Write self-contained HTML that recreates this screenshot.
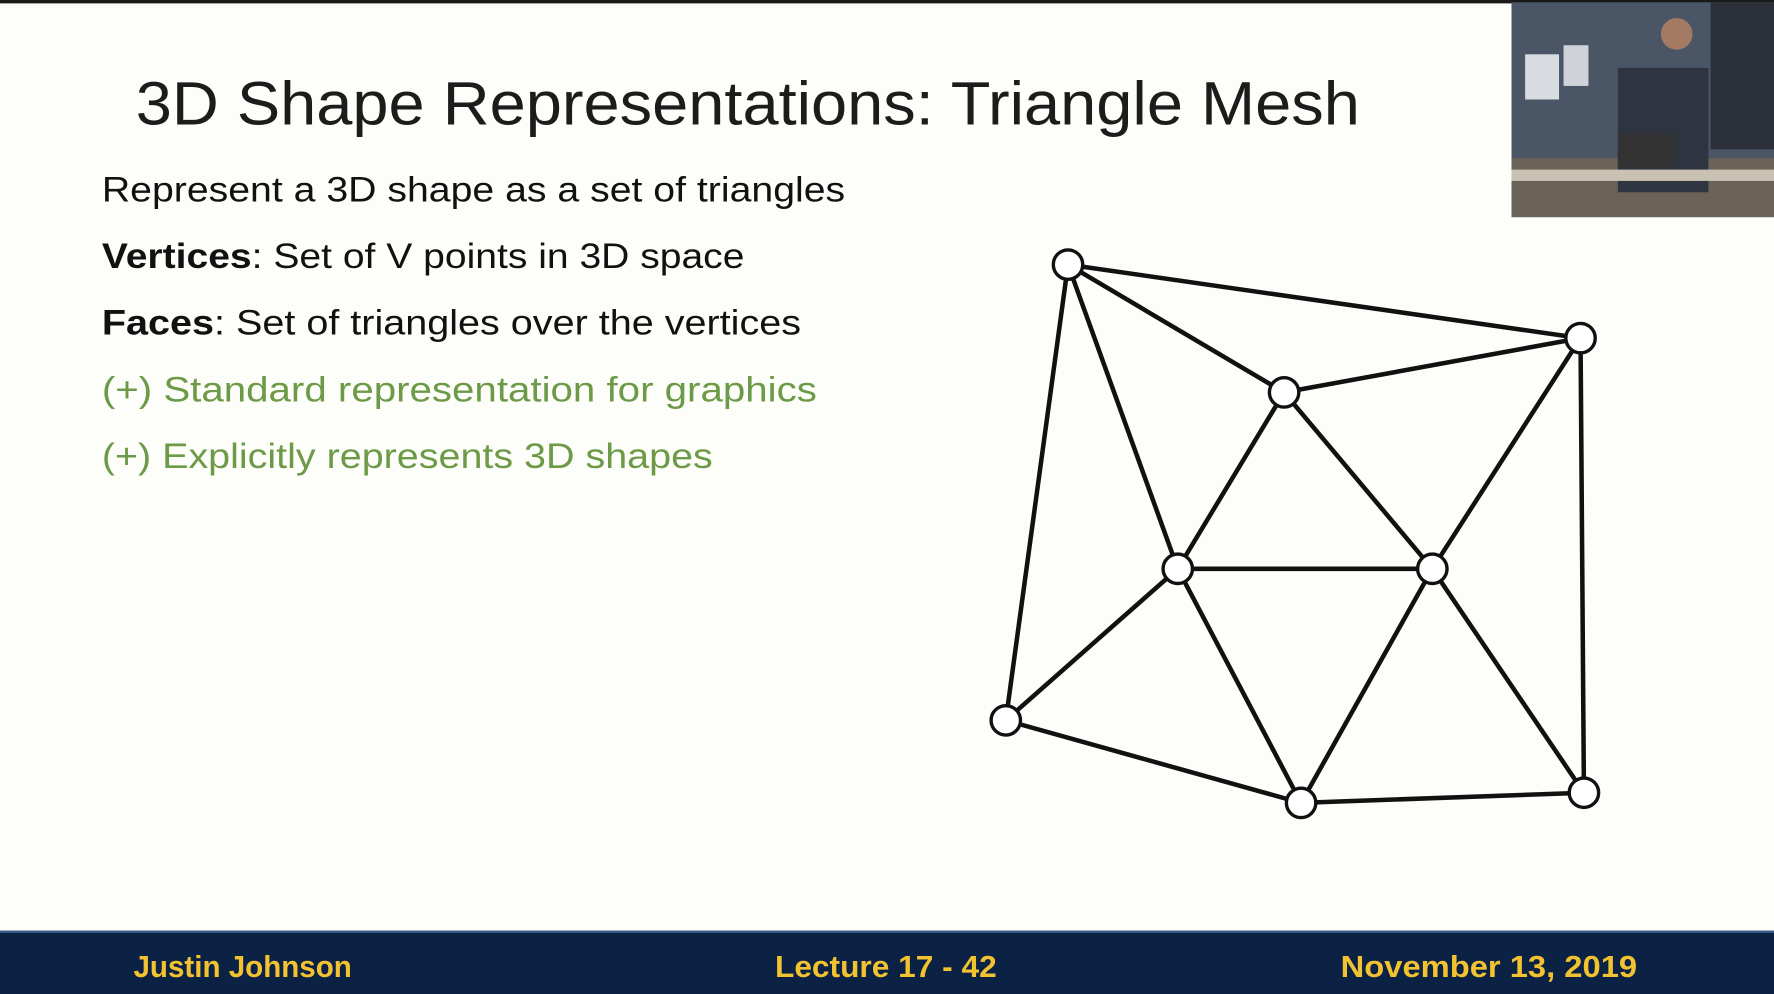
<!DOCTYPE html>
<html><head><meta charset="utf-8"><style>
html,body{margin:0;padding:0;background:#fdfdfa;overflow:hidden}
svg{display:block}
</style></head><body>
<svg width="1774" height="994" viewBox="0 0 1568 879" preserveAspectRatio="none" xmlns="http://www.w3.org/2000/svg">
<rect x="0" y="0" width="1568" height="879" fill="#fdfdfa"/>
<rect x="0" y="0" width="1568" height="3" fill="#1a1a1a"/>
<text x="120" y="110" font-family="Liberation Sans, sans-serif" font-size="54" fill="#1c1c1c" textLength="1082" lengthAdjust="spacingAndGlyphs">3D Shape Representations: Triangle Mesh</text>
<g font-family="Liberation Sans, sans-serif" font-size="31">
<text x="90" y="178" fill="#111" textLength="657" lengthAdjust="spacingAndGlyphs">Represent a 3D shape as a set of triangles</text>
<text x="90" y="237" fill="#111" textLength="568" lengthAdjust="spacingAndGlyphs"><tspan font-weight="bold">Vertices</tspan>: Set of V points in 3D space</text>
<text x="90" y="296" fill="#111" textLength="618" lengthAdjust="spacingAndGlyphs"><tspan font-weight="bold">Faces</tspan>: Set of triangles over the vertices</text>
<text x="90" y="355" fill="#6c9a46" textLength="632" lengthAdjust="spacingAndGlyphs">(+) Standard representation for graphics</text>
<text x="90" y="414" fill="#6c9a46" textLength="540" lengthAdjust="spacingAndGlyphs">(+) Explicitly represents 3D shapes</text>
</g>
<g stroke="#111" stroke-width="4" stroke-linecap="round">
<line x1="944" y1="234" x2="1397" y2="299"/>
<line x1="944" y1="234" x2="1135" y2="347"/>
<line x1="1135" y1="347" x2="1397" y2="299"/>
<line x1="944" y1="234" x2="889" y2="637"/>
<line x1="944" y1="234" x2="1041" y2="503"/>
<line x1="1135" y1="347" x2="1041" y2="503"/>
<line x1="1135" y1="347" x2="1266" y2="503"/>
<line x1="1397" y1="299" x2="1266" y2="503"/>
<line x1="1397" y1="299" x2="1400" y2="701"/>
<line x1="1041" y1="503" x2="1266" y2="503"/>
<line x1="889" y1="637" x2="1041" y2="503"/>
<line x1="889" y1="637" x2="1150" y2="710"/>
<line x1="1041" y1="503" x2="1150" y2="710"/>
<line x1="1266" y1="503" x2="1150" y2="710"/>
<line x1="1266" y1="503" x2="1400" y2="701"/>
<line x1="1150" y1="710" x2="1400" y2="701"/>
</g>
<g fill="#fff" stroke="#111" stroke-width="3">
<circle cx="944" cy="234" r="13"/><circle cx="1397" cy="299" r="13"/>
<circle cx="1135" cy="347" r="13"/><circle cx="1041" cy="503" r="13"/>
<circle cx="1266" cy="503" r="13"/><circle cx="889" cy="637" r="13"/>
<circle cx="1150" cy="710" r="13"/><circle cx="1400" cy="701" r="13"/>
</g>
<!-- webcam -->
<rect x="1336" y="2" width="232" height="190" fill="#4a5566"/>
<rect x="1336" y="140" width="232" height="52" fill="#6b6258"/>
<rect x="1348" y="48" width="30" height="40" fill="#d8dbe0"/>
<rect x="1382" y="40" width="22" height="36" fill="#cfd3d9"/>
<rect x="1512" y="2" width="56" height="130" fill="#2a2f38"/>
<rect x="1430" y="60" width="80" height="110" fill="#2e3540"/>
<circle cx="1482" cy="30" r="14" fill="#a57a63"/>
<rect x="1430" y="118" width="50" height="30" fill="#333"/>
<rect x="1336" y="150" width="232" height="10" fill="#c9c2b2"/>
<!-- footer -->
<rect x="0" y="823" width="1568" height="56" fill="#0c2244"/>
<rect x="0" y="823" width="1568" height="2" fill="#3a5a88"/>
<g font-family="Liberation Sans, sans-serif" font-size="27" fill="#f2c230" font-weight="bold">
<text x="118" y="864" textLength="193" lengthAdjust="spacingAndGlyphs">Justin Johnson</text>
<text x="685" y="864" textLength="196" lengthAdjust="spacingAndGlyphs">Lecture 17 - 42</text>
<text x="1185" y="864" textLength="262" lengthAdjust="spacingAndGlyphs">November 13, 2019</text>
</g>
</svg>
</body></html>
